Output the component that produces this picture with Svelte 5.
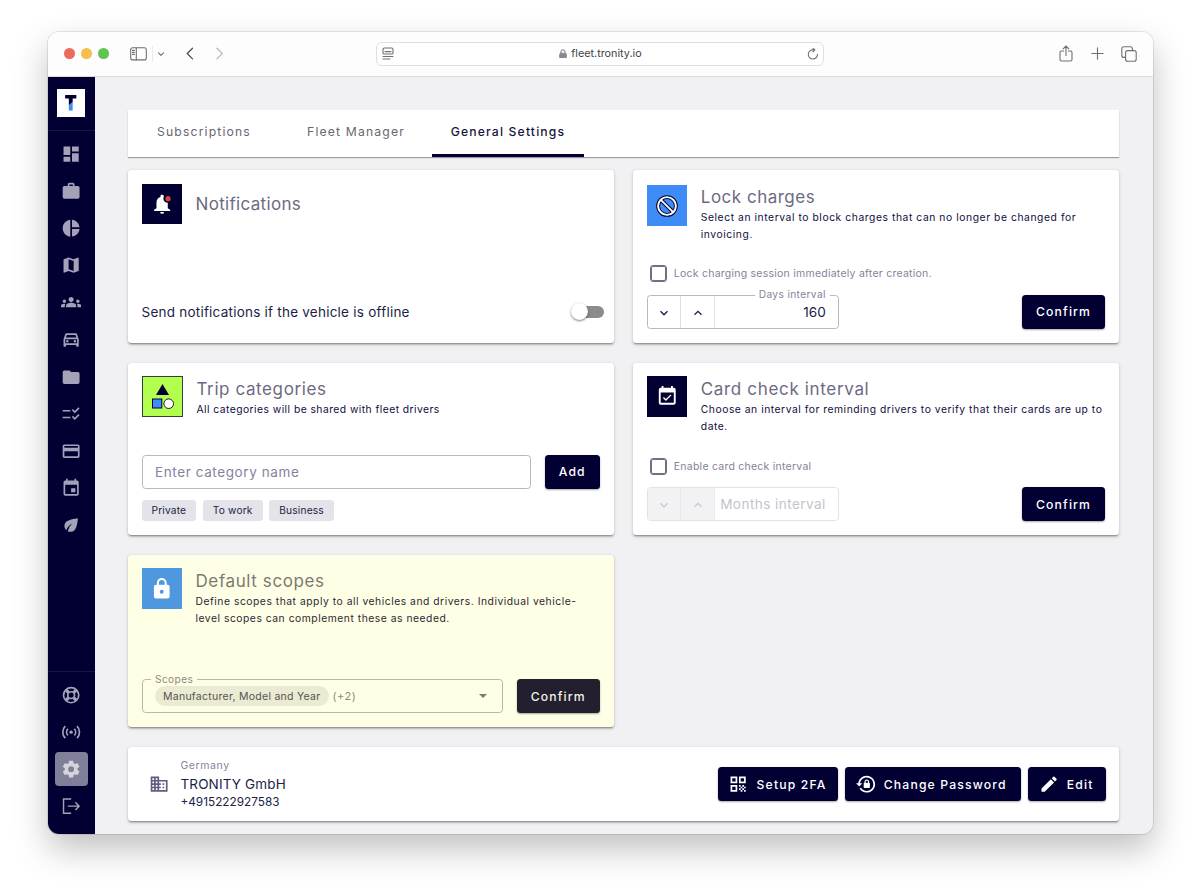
<script lang="ts">
	const icons = {
		dashboard: 'M13 3v6h8V3m-8 18h8V11h-8M3 21h8v-6H3m0-2h8V3H3v10Z',
		briefcase:
			'M10 2h4a2 2 0 0 1 2 2v2h4a2 2 0 0 1 2 2v11a2 2 0 0 1-2 2H4a2 2 0 0 1-2-2V8c0-1.1.9-2 2-2h4V4c0-1.1.9-2 2-2m4 4V4h-4v2h4Z',
		pie: 'M11 2v20c-5.07-.5-9-4.79-9-10s3.93-9.5 9-10zm2.03 0v8.99H22c-.47-4.74-4.24-8.52-8.97-8.99zm0 11.01V22c4.74-.47 8.5-4.25 8.97-8.99h-8.97z',
		map: 'M15 19l-6-2.11V5l6 2.11M20.5 3c-.06 0-.11 0-.16.03L15 5.1 9 3 3.36 4.9c-.21.07-.36.25-.36.48V20.5a.5.5 0 0 0 .5.5c.05 0 .11 0 .16-.03L9 18.9l6 2.1 5.64-1.9c.21-.1.36-.25.36-.48V3.5a.5.5 0 0 0-.5-.5z',
		groups:
			'M12 12.75c1.63 0 3.07.39 4.24.9 1.08.48 1.76 1.56 1.76 2.73V18H6v-1.61c0-1.18.68-2.26 1.76-2.73 1.17-.52 2.61-.91 4.24-.91zM4 13c1.1 0 2-.9 2-2s-.9-2-2-2-2 .9-2 2 .9 2 2 2zm1.13 1.1c-.37-.06-.74-.1-1.13-.1-.99 0-1.93.21-2.78.58A2.01 2.01 0 0 0 0 16.43V18h4.5v-1.61c0-.83.23-1.61.63-2.29zM20 13c1.1 0 2-.9 2-2s-.9-2-2-2-2 .9-2 2 .9 2 2 2zm4 3.43c0-.81-.48-1.53-1.22-1.85A6.95 6.95 0 0 0 20 14c-.39 0-.76.04-1.13.1.4.68.63 1.46.63 2.29V18H24v-1.57zM12 6c1.66 0 3 1.34 3 3s-1.34 3-3 3-3-1.34-3-3 1.34-3 3-3z',
		car: 'M18.92 6.01C18.72 5.42 18.16 5 17.5 5h-11c-.66 0-1.21.42-1.42 1.01L3 12v8c0 .55.45 1 1 1h1c.55 0 1-.45 1-1v-1h12v1c0 .55.45 1 1 1h1c.55 0 1-.45 1-1v-8l-2.08-5.99zM6.85 7h10.29l1.04 3H5.81l1.04-3zM19 17H5v-5h14v5zM7.5 13a1.5 1.5 0 1 0 0 3 1.5 1.5 0 0 0 0-3zm9 0a1.5 1.5 0 1 0 0 3 1.5 1.5 0 0 0 0-3z',
		folder: 'M10 4H4c-1.1 0-2 .9-2 2v12a2 2 0 0 0 2 2h16a2 2 0 0 0 2-2V8a2 2 0 0 0-2-2h-8l-2-2z',
		checklist:
			'M11 7H2v2h9V7zm0 8H2v2h9v-2zm5.34-4-3.54-3.54 1.41-1.41 2.12 2.12 4.24-4.24L22 5.34 16.34 11zm0 8-3.54-3.54 1.41-1.41 2.12 2.12 4.24-4.24L22 13.34 16.34 19z',
		card: 'M20 4H4c-1.11 0-2 .89-2 2v12c0 1.11.89 2 2 2h16c1.11 0 2-.89 2-2V6c0-1.11-.89-2-2-2m0 14H4v-6h16v6m0-10H4V6h16v2z',
		calendar:
			'M19 19H5V8h14m-3-7v2H8V1H6v2H5c-1.11 0-2 .89-2 2v14a2 2 0 0 0 2 2h14a2 2 0 0 0 2-2V5a2 2 0 0 0-2-2h-1V1m-1 11h-5v5h5v-5z',
		leaf: 'M6.05 8.05a7 7 0 0 0-.02 9.88c1.47-3.4 4.09-6.24 7.36-7.93A15.95 15.95 0 0 0 8 19.32c2.6 1.23 5.8.78 7.95-1.37C19.43 14.47 20 4 20 4S9.53 4.57 6.05 8.05z',
		cog: 'M12 15.5A3.5 3.5 0 0 1 8.5 12 3.5 3.5 0 0 1 12 8.5a3.5 3.5 0 0 1 3.5 3.5 3.5 3.5 0 0 1-3.5 3.5m7.43-2.53c.04-.32.07-.64.07-.97s-.03-.66-.07-1l2.11-1.63c.19-.15.24-.42.12-.64l-2-3.46c-.12-.22-.39-.31-.61-.22l-2.49 1c-.52-.39-1.06-.73-1.69-.98l-.37-2.65A.506.506 0 0 0 14 2h-4c-.25 0-.46.18-.5.42l-.37 2.65c-.63.25-1.17.59-1.69.98l-2.49-1c-.22-.09-.49 0-.61.22l-2 3.46c-.13.22-.07.49.12.64L4.57 11c-.04.34-.07.67-.07 1s.03.65.07.97l-2.11 1.66c-.19.15-.25.42-.12.64l2 3.46c.12.22.39.3.61.22l2.49-1.01c.52.4 1.06.74 1.69.99l.37 2.65c.04.24.25.42.5.42h4c.25 0 .46-.18.5-.42l.37-2.65c.63-.26 1.17-.59 1.69-.99l2.49 1.01c.22.08.49 0 .61-.22l2-3.46c.12-.22.07-.49-.12-.64l-2.11-1.66z',
		lock: 'M12 17a2 2 0 0 0 2-2 2 2 0 0 0-2-2 2 2 0 0 0-2 2 2 2 0 0 0 2 2m6-9a2 2 0 0 1 2 2v10a2 2 0 0 1-2 2H6a2 2 0 0 1-2-2V10a2 2 0 0 1 2-2h1V6a5 5 0 0 1 10 0v2h1m-6-5a3 3 0 0 0-3 3v2h6V6a3 3 0 0 0-3-3z',
		calendarCheck:
			'M16.53 11.06 15.47 10l-4.88 4.88-2.12-2.12-1.06 1.06L10.59 17l5.94-5.94zM19 3h-1V1h-2v2H8V1H6v2H5c-1.11 0-1.99.9-1.99 2L3 19a2 2 0 0 0 2 2h14c1.1 0 2-.9 2-2V5c0-1.1-.9-2-2-2zm0 16H5V8h14v11z',
		building:
			'M12 7V3H2v18h20V7H12zM6 19H4v-2h2v2zm0-4H4v-2h2v2zm0-4H4V9h2v2zm0-4H4V5h2v2zm4 12H8v-2h2v2zm0-4H8v-2h2v2zm0-4H8V9h2v2zm0-4H8V5h2v2zm10 12h-8v-2h2v-2h-2v-2h2v-2h-2V9h8v10zm-2-8h-2v2h2v-2zm0 4h-2v2h2v-2z',
		qr: 'M3 11h8V3H3v8zm2-6h4v4H5V5zM3 21h8v-8H3v8zm2-6h4v4H5v-4zM13 3v8h8V3h-8zm6 6h-4V5h4v4zM13 13h2v2h-2zM15 15h2v2h-2zM13 17h2v2h-2zM17 17h2v2h-2zM19 19h2v2h-2zM15 19h2v2h-2zM17 13h2v2h-2zM19 15h2v2h-2z',
		lockReset:
			'M12.63 2c5.53 0 10.01 4.5 10.01 10s-4.48 10-10.01 10c-3.51 0-6.58-1.82-8.37-4.57l1.58-1.25C7.25 18.47 9.76 20 12.64 20a8 8 0 0 0 8-8 8 8 0 0 0-8-8C8.56 4 5.2 7.06 4.71 11h2.76l-3.74 3.73L0 11h2.69c.5-5.05 4.76-9 9.94-9m2.96 8.24c.5.01.91.41.91.92v4.61c0 .5-.41.92-.92.92h-5.53c-.51 0-.92-.42-.92-.92v-4.61c0-.51.41-.91.91-.92V9.23c0-1.53 1.25-2.77 2.77-2.77 1.53 0 2.78 1.24 2.78 2.77v1.01m-2.78-2.38c-.75 0-1.37.61-1.37 1.37v1.01h2.75V9.23c0-.76-.62-1.37-1.38-1.37z',
		pencil:
			'M3 17.25V21h3.75L17.81 9.94l-3.75-3.75L3 17.25zM20.71 7.04a1 1 0 0 0 0-1.41l-2.34-2.34a1 1 0 0 0-1.41 0l-1.83 1.83 3.75 3.75 1.83-1.83z'
	};

	type IconName = keyof typeof icons;

	const nav: IconName[] = [
		'dashboard',
		'briefcase',
		'pie',
		'map',
		'groups',
		'car',
		'folder',
		'checklist',
		'card',
		'calendar',
		'leaf'
	];

	const tabs = [
		{ label: 'Subscriptions', active: false },
		{ label: 'Fleet Manager', active: false },
		{ label: 'General Settings', active: true }
	];

	const categories = ['Private', 'To work', 'Business'];
</script>

{#snippet icon(name: IconName)}
	<svg class="icon" viewBox="0 0 24 24"><path d={icons[name]} fill="currentColor" fill-rule="evenodd" /></svg>
{/snippet}

{#snippet stepper()}
	<span class="step"><svg viewBox="0 0 12 12"><path d="M2.5 4.3 6 7.8l3.5-3.5" /></svg></span>
	<span class="step"><svg viewBox="0 0 12 12"><path d="M2.5 7.8 6 4.3l3.5 3.5" /></svg></span>
{/snippet}

<div class="desktop">
	<div class="window">
		<header class="chrome">
			<div class="chrome-side">
				<span class="dot red"></span>
				<span class="dot yellow"></span>
				<span class="dot green"></span>
				<svg class="sidebar-toggle" viewBox="0 0 17 14">
					<rect x=".7" y=".7" width="15.6" height="12.2" rx="2" />
					<path d="M6.3 1v12M2.5 3.4h1.8M2.5 5.4h1.8M2.5 7.4h1.8" />
				</svg>
				<span class="chrome-line"></span>
				<svg class="tiny" viewBox="0 0 8 8"><path d="m1.5 2.8 2.5 2.5 2.5-2.5" /></svg>
				<svg class="back" viewBox="0 0 8 14"><path d="M7 1.3 1.3 7 7 12.7" /></svg>
				<svg class="forward" viewBox="0 0 8 14"><path d="M1 1.3 6.7 7 1 12.7" /></svg>
			</div>
			<div class="address">
				<svg class="reader" viewBox="0 0 12 13">
					<rect x="1" y="1" width="10" height="6" rx="1.3" />
					<path d="M3 4.6h6M1 9.5h10M1 12h7" />
				</svg>
				<span class="url">
					<svg viewBox="0 0 9 11"><path d="M2.2 5V3.2a2.3 2.3 0 0 1 4.6 0V5" /><rect x=".8" y="4.8" width="7.4" height="5.6" rx="1" /></svg>
					fleet.tronity.io
				</span>
				<svg class="reload" viewBox="0 0 12 12"><path d="M10.5 6.4A4.6 4.6 0 1 1 6.5 1.9h1.2M6 .2l1.9 1.7L6 3.8" /></svg>
			</div>
			<div class="chrome-actions">
				<svg width="14" height="17" viewBox="0 0 14 17"><path d="M4.6 6H2.5C1.6 6 1 6.6 1 7.5v7c0 .9.6 1.5 1.5 1.5h9c.9 0 1.5-.6 1.5-1.5v-7c0-.9-.6-1.5-1.5-1.5H9.4M7 10.5V1M4.2 3.8 7 1l2.8 2.8" /></svg>
				<svg width="13" height="13" viewBox="0 0 13 13"><path d="M6.500.8v11.400M.8 6.500h11.400" /></svg>
				<svg width="16" height="16" viewBox="0 0 16 16"><rect x="4.6" y="4.6" width="10.6" height="10.6" rx="2" /><path d="M4.6 11.4H2.8c-1.2 0-2-.8-2-2V2.8c0-1.2.8-2 2-2h6.6c1.2 0 2 .8 2 2v1.8" /></svg>
			</div>
		</header>

		<div class="app">
			<nav class="sidebar">
				<div class="logo">
					<svg viewBox="0 0 27 27">
						<path d="M8 6h11v3.3h-3.6V13l-3.8 3V9.3H8z" fill="#020033" />
						<path d="M15.4 12.2V21h-3.8v-4.500z" fill="#3f8cf8" />
					</svg>
				</div>
				<div class="nav-main">
					{#each nav as name}
						<span class="nav-item">{@render icon(name)}</span>
					{/each}
				</div>
				<div class="nav-foot">
					<span class="nav-item">
						<svg class="icon line" viewBox="0 0 24 24">
							<circle cx="12" cy="12" r="9" /><circle cx="12" cy="12" r="4" />
							<path d="m5.8 5.8 3.2 3.2m6 6 3.2 3.2M18.2 5.8 15 9m-6 6-3.2 3.2" stroke-width="4" />
						</svg>
					</span>
					<span class="nav-item">
						<svg class="icon line" viewBox="0 0 24 24">
							<circle cx="12" cy="12" r="2" fill="currentColor" stroke="none" />
							<path d="M8.2 15.8a5.4 5.4 0 0 1 0-7.6M15.8 8.200a5.400 5.400 0 0 1 0 7.600M5 19a9.900 9.900 0 0 1 0-14M19 5a9.900 9.900 0 0 1 0 14" />
						</svg>
					</span>
					<span class="nav-item current">{@render icon('cog')}</span>
					<span class="nav-item">
						<svg class="icon line thin" viewBox="0 0 24 24"><path d="M12 3.500H3v17h9M8 12h13M17 7.500l4.500 4.500-4.500 4.500" /></svg>
					</span>
				</div>
			</nav>

			<main>
				<div class="tabs">
					{#each tabs as tab}
						<span class="tab" class:active={tab.active}>{tab.label}</span>
					{/each}
				</div>

				<div class="cards">
					<section class="card">
						<div class="head middle">
							<div class="tile navy">
								<svg class="icon" viewBox="0 0 24 24">
									<path d="M12 1c1.200 0 2 .7 2 1.700v1c2.900.8 4.700 3.400 4.700 6.300v6.800l2.800 2v1.400H2.500v-1.400l2.800-2V10c0-2.900 1.800-5.500 4.700-6.300v-1C10 1.700 10.800 1 12 1zM9.700 21.200h4.600a2.300 2.300 0 0 1-4.600 0z" fill="#fff" />
									<circle cx="18.500" cy="5.500" r="5" fill="#020033" />
									<circle cx="19" cy="5.500" r="3.100" fill="#d9433b" />
								</svg>
							</div>
							<h2 class="t-notif">Notifications</h2>
						</div>
						<div class="row offline">
							<span class="offline-label">Send notifications if the vehicle is offline</span>
							<span class="switch"><span class="thumb"></span></span>
						</div>
					</section>

					<section class="card lower">
						<div class="head">
							<div class="tile blue">
								<svg class="icon" viewBox="-1 -1 26 26">
									<g fill="none" stroke="#020033" stroke-width="4.600"><circle cx="12" cy="12" r="10.500" /><path d="m5 5 14 14" /></g>
									<g fill="none" stroke="#fff" stroke-width="2.300"><circle cx="12" cy="12" r="10.500" /><path d="m4.500 4.500 15 15" /></g>
								</svg>
							</div>
							<div>
								<h2 class="t-lock">Lock charges</h2>
								<p class="d-lock">Select an interval to block charges that can no longer be changed for<br />invoicing.</p>
							</div>
						</div>
						<div class="bottom">
							<label class="check"><span class="box"></span><span class="c-lock">Lock charging session immediately after creation.</span></label>
							<div class="row">
								<div class="number">
									{@render stepper()}
									<span class="value">160</span>
									<span class="float-label right">Days interval</span>
								</div>
								<button class="btn confirm">Confirm</button>
							</div>
						</div>
					</section>

					<section class="card">
						<div class="head">
							<div class="tile lime">
								<svg viewBox="0 0 41 41">
									<rect x=".5" y=".5" width="40" height="40" fill="#b2ff4d" stroke="#33403a" />
									<path d="m20.500 8 6.500 11H14z" fill="#020033" />
									<rect x="10.500" y="23" width="9.300" height="9" fill="#3f8cf8" stroke="#020033" />
									<circle cx="26.700" cy="27.700" r="4.800" fill="#fff" stroke="#020033" stroke-width=".9" />
								</svg>
							</div>
							<div>
								<h2 class="t-trip">Trip categories</h2>
								<p class="d-trip">All categories will be shared with fleet drivers</p>
							</div>
						</div>
						<div class="bottom">
							<div class="row trip-row">
								<div class="field"><span class="placeholder">Enter category name</span></div>
								<button class="btn add">Add</button>
							</div>
							<div class="chips">
								{#each categories as category}
									<span class="chip">{category}</span>
								{/each}
							</div>
						</div>
					</section>

					<section class="card">
						<div class="head">
							<div class="tile navy calendar">{@render icon('calendarCheck')}</div>
							<div>
								<h2 class="t-card">Card check interval</h2>
								<p class="d-card">Choose an interval for reminding drivers to verify that their cards are up to<br />date.</p>
							</div>
						</div>
						<div class="bottom">
							<label class="check"><span class="box"></span><span class="c-card">Enable card check interval</span></label>
							<div class="row">
								<div class="number disabled">
									{@render stepper()}
									<span class="value">Months interval</span>
								</div>
								<button class="btn confirm">Confirm</button>
							</div>
						</div>
					</section>

					<section class="card highlighted">
						<div class="head">
							<div class="tile sky">{@render icon('lock')}</div>
							<div>
								<h2 class="t-scopes">Default scopes</h2>
								<p class="d-scopes">Define scopes that apply to all vehicles and drivers. Individual vehicle-<br />level scopes can complement these as needed.</p>
							</div>
						</div>
						<div class="row scopes-row">
							<div class="field scopes">
								<span class="pill">Manufacturer, Model and Year</span>
								<span class="more">(+2)</span>
								<span class="caret"></span>
								<span class="float-label left">Scopes</span>
							</div>
							<button class="btn confirm dark">Confirm</button>
						</div>
					</section>
				</div>

				<section class="account">
					<span class="building">{@render icon('building')}</span>
					<div class="company">
						<span class="country">Germany</span>
						<span class="name">TRONITY GmbH</span>
						<span class="phone">+4915222927583</span>
					</div>
					<div class="account-actions">
						<button class="btn setup">{@render icon('qr')}<span>Setup 2FA</span></button>
						<button class="btn change">{@render icon('lockReset')}<span>Change Password</span></button>
						<button class="btn edit">{@render icon('pencil')}<span>Edit</span></button>
					</div>
				</section>
			</main>
		</div>
	</div>
</div>

<style>
	:global(body) {
		background: #fff;
	}

	.desktop {
		width: 1200px;
		height: 896px;
		box-sizing: border-box;
		padding: 31.5px 0 0 47.5px;
		overflow: hidden;
	}

	.window {
		width: 1105.5px;
		height: 802px;
		display: flex;
		flex-direction: column;
		border-radius: 11px;
		overflow: hidden;
		background: #f1f1f4;
		box-shadow:
			0 0 0 1px rgba(0, 0, 0, 0.09),
			0 15px 34px rgba(0, 0, 0, 0.25);
		font-family: Inter, 'Open Sans', sans-serif;
		color: #201e45;
	}

	svg {
		display: block;
		flex: none;
	}

	.chrome {
		height: 45px;
		box-sizing: border-box;
		display: grid;
		grid-template-columns: 328.5px 448px 1fr;
		align-items: center;
		background: #fdfdfd;
		border-bottom: 1px solid #dcdcdc;
		flex: none;
	}

	.chrome svg {
		fill: none;
		stroke: #707070;
		stroke-width: 1.1;
		stroke-linecap: round;
		stroke-linejoin: round;
	}

	.chrome-side {
		display: flex;
		align-items: center;
		padding-left: 16.5px;
	}

	.dot {
		width: 10.5px;
		height: 10.5px;
		border-radius: 50%;
		margin-right: 6.5px;
	}

	.red {
		background: #ec6a5e;
	}

	.yellow {
		background: #f4bf4f;
	}

	.green {
		background: #61c554;
	}

	.sidebar-toggle {
		width: 17px;
		height: 14px;
		margin-left: 15px;
	}

	.chrome-line {
		width: 1px;
		height: 16px;
		margin-left: 5px;
		background: #ececec;
	}

	.tiny {
		width: 8px;
		margin-left: 4px;
	}

	.back {
		width: 7.5px;
		margin-left: 20.5px;
	}

	.chrome .back {
		stroke: #4d4d4d;
		stroke-width: 1.4;
	}

	.forward {
		width: 7.5px;
		margin-left: 22.5px;
	}

	.chrome .forward {
		stroke: #b5b5b5;
		stroke-width: 1.3;
	}

	.address {
		height: 24px;
		box-sizing: border-box;
		display: flex;
		align-items: center;
		justify-content: space-between;
		padding: 0 4px 0 5px;
		border: 1px solid #dfdfdf;
		border-radius: 6px;
		background: #fff;
	}

	.reader {
		width: 12px;
	}

	.reload {
		width: 12px;
	}

	.url {
		display: flex;
		align-items: center;
		gap: 4px;
		font-size: 10.8px;
		color: #424242;
	}

	.url svg {
		width: 8px;
	}

	.url rect {
		fill: #8a8a8a;
		stroke: #8a8a8a;
	}

	.chrome-actions {
		display: flex;
		align-items: center;
		justify-content: flex-end;
		gap: 17.5px;
		padding-right: 16px;
	}

	.app {
		flex: 1;
		display: flex;
	}

	.sidebar {
		width: 47px;
		display: flex;
		flex-direction: column;
		background: #020033;
		color: #a3a2b8;
	}

	.logo {
		height: 54.5px;
		box-sizing: border-box;
		padding: 12.5px 9.5px;
		border-bottom: 1px solid #17163f;
	}

	.logo svg {
		width: 27.5px;
		background: #fff;
	}

	.nav-main {
		flex: 1;
		padding-top: 6px;
	}

	.nav-foot {
		height: 162.5px;
		box-sizing: border-box;
		padding-top: 6px;
		border-top: 1px solid #17163f;
	}

	.nav-item {
		width: 33px;
		height: 34px;
		display: flex;
		align-items: center;
		justify-content: center;
		margin: 0 7px 3.12px;
		border-radius: 4px;
	}

	.current {
		background: #807f99;
		color: #d5d4dd;
	}

	.icon {
		width: 20.25px;
		height: 20.25px;
	}

	.line {
		fill: none;
		stroke: currentColor;
		stroke-width: 2;
	}

	.thin {
		stroke-width: 1.7;
	}

	main {
		flex: 1;
		padding: 33.5px 34px 0 33.5px;
	}

	.tabs {
		height: 47px;
		display: flex;
		background: #fff;
		box-shadow: 0 1px 1px rgba(0, 0, 0, 0.35);
	}

	.tab {
		width: 152px;
		height: 47px;
		box-sizing: border-box;
		padding-bottom: 4px;
		display: flex;
		align-items: center;
		justify-content: center;
		font-size: 12.2px;
		letter-spacing: 1.15px;
		color: #67666f;
	}

	.active {
		border-bottom: 3px solid #020033;
		padding-bottom: 1px;
		font-weight: 500;
		color: #17153b;
	}

	.cards {
		display: grid;
		grid-template-columns: 485.5px 485.5px;
		grid-auto-rows: 172.5px;
		gap: 19.8px;
		margin-top: 13.4px;
	}

	.card,
	.account {
		box-sizing: border-box;
		border-radius: 3.5px;
		background: #fff;
		box-shadow:
			0 2.5px 1px -1.5px rgba(0, 0, 0, 0.2),
			0 1.5px 2px rgba(0, 0, 0, 0.18),
			0 1px 4px rgba(0, 0, 0, 0.12);
	}

	.card {
		display: flex;
		flex-direction: column;
		justify-content: space-between;
		padding: 13.5px 13.5px 14px;
	}

	.lower {
		padding-top: 15px;
	}

	.head {
		display: flex;
		gap: 13.5px;
	}

	.middle {
		align-items: center;
	}

	.tile {
		width: 40.5px;
		height: 40.5px;
		flex: none;
		display: flex;
		align-items: center;
		justify-content: center;
		color: #fff;
	}

	.navy {
		background: #020033;
	}

	.calendar .icon {
		width: 22.5px;
		height: 22.5px;
	}

	.blue {
		background: #3f8cf8;
	}

	.blue .icon {
		width: 22px;
		height: 22px;
	}

	.sky {
		background: #4f97df;
	}

	.sky .icon {
		width: 23.500px;
		height: 23.500px;
	}

	.lime {
		width: 41.5px;
	}

	.lime svg {
		width: 41px;
	}

	h2 {
		margin: 2px 0 0;
		font-size: 17px;
		line-height: 22px;
		font-weight: 400;
		color: #6c6a82;
		white-space: nowrap;
	}

	.middle h2 {
		margin: 0;
	}

	.lower h2 {
		margin-top: 1px;
	}

	.t-notif {
		letter-spacing: 0.32px;
	}

	.t-lock {
		letter-spacing: 0.5px;
	}

	.t-trip,
	.t-scopes {
		letter-spacing: 0.6px;
	}

	.t-card {
		letter-spacing: 0.66px;
	}

	p {
		margin: 1px 0 0;
		font-size: 10.3px;
		line-height: 16.9px;
		color: #100e3d;
		white-space: nowrap;
	}

	.d-lock {
		letter-spacing: 0.57px;
	}

	.d-trip {
		letter-spacing: 0.46px;
	}

	.d-card,
	.d-scopes {
		letter-spacing: 0.53px;
	}

	.row {
		display: flex;
		align-items: center;
		justify-content: space-between;
	}

	.offline {
		height: 34px;
	}

	.offline-label {
		font-size: 13.5px;
		letter-spacing: 0.23px;
	}

	.switch {
		width: 27.5px;
		height: 12px;
		margin-right: -3.5px;
		border-radius: 6px;
		background: #8b8b8b;
	}

	.thumb {
		display: block;
		width: 17px;
		height: 17px;
		margin: -2.5px 0 0 -5px;
		border-radius: 50%;
		background: #fff;
		box-shadow:
			0 1px 2px rgba(0, 0, 0, 0.35),
			0 1px 3px rgba(0, 0, 0, 0.2);
	}

	.btn {
		height: 34px;
		padding: 0;
		display: flex;
		align-items: center;
		justify-content: center;
		border: 0;
		border-radius: 3.5px;
		background: #020033;
		box-shadow: 0 1px 2px rgba(0, 0, 0, 0.35);
		color: #fff;
		font: 500 12.2px Inter, sans-serif;
		letter-spacing: 1.15px;
	}

	.confirm {
		width: 83.5px;
	}

	.add {
		width: 55.5px;
	}

	.dark {
		background: #231f2e;
		color: #f4f4e6;
	}

	.check {
		display: flex;
		align-items: center;
		gap: 7.5px;
		height: 14px;
		margin: 0 0 14px 4.500px;
		font-size: 10.5px;
		letter-spacing: 0.24px;
		color: #85839a;
	}

	.box {
		width: 15px;
		height: 15px;
		box-sizing: border-box;
		border: 1.5px solid #716f86;
		outline: 0.3px solid #716f86;
		border-radius: 2px;
	}

	.number {
		position: relative;
		width: 192.5px;
		height: 34px;
		box-sizing: border-box;
		display: flex;
		border: 1px solid #b7b6c4;
		border-radius: 3.5px;
	}

	.step {
		width: 33.5px;
		box-sizing: border-box;
		display: flex;
		align-items: center;
		justify-content: center;
		padding-top: 2px;
		border-right: 1px solid #dfdfe5;
	}

	.step svg {
		width: 12px;
		fill: none;
		stroke: #201e45;
		stroke-width: 1.3;
	}

	.value {
		flex: 1;
		display: flex;
		align-items: center;
		justify-content: flex-end;
		padding-right: 12.5px;
		font-size: 13.6px;
	}

	.disabled {
		border-color: #e2e2e7;
		color: #c4c3cd;
	}

	.disabled .value {
		letter-spacing: 0.42px;
	}

	.disabled .step {
		background: #f2f2f4;
		border-color: #e9e9ec;
	}

	.disabled .step svg {
		stroke: #c9c8d1;
	}

	.float-label {
		position: absolute;
		top: -7.5px;
		padding: 0 4px;
		background: #fff;
		font-size: 10.2px;
		line-height: 13px;
		letter-spacing: 0.36px;
		color: #85839a;
	}

	.right {
		right: 8.5px;
	}

	.left {
		left: 8.5px;
		background: #ffffe5;
		color: #8c8b80;
	}

	.field {
		position: relative;
		height: 34px;
		box-sizing: border-box;
		display: flex;
		align-items: center;
		padding: 0 12.5px;
		border: 1px solid #b7b6c4;
		border-radius: 3.5px;
	}

	.trip-row .field {
		width: 389.5px;
	}

	.placeholder {
		font-size: 13.5px;
		letter-spacing: 0.6px;
		color: #85839a;
	}

	.chips {
		display: flex;
		gap: 6.7px;
		margin-top: 11px;
	}

	.chip {
		height: 21.5px;
		display: flex;
		align-items: center;
		padding: 0 10px;
		border-radius: 3px;
		background: #e4e3ea;
		font-size: 10.2px;
		letter-spacing: 0.16px;
	}

	.highlighted {
		background: #ffffe5;
	}

	.highlighted h2 {
		color: #7b7a72;
	}

	.highlighted p {
		color: #2b2935;
	}

	.scopes {
		width: 361px;
		border-color: #b9b8a8;
	}

	.pill {
		height: 20px;
		display: flex;
		align-items: center;
		padding: 0 8px;
		border-radius: 10px;
		background: #ebebd3;
		font-size: 10.5px;
		letter-spacing: 0.27px;
		color: #55544f;
	}

	.more {
		margin-left: 4px;
		font-size: 11px;
		letter-spacing: 0.55px;
		color: #8c8b80;
	}

	.caret {
		margin-left: auto;
		margin-right: 2.5px;
		border: 4.5px solid transparent;
		border-top-color: #7c7b70;
		border-bottom: 0;
	}

	.account {
		height: 74px;
		display: flex;
		align-items: center;
		margin-top: 19.6px;
		padding: 0 13.5px 0 21px;
	}

	.building {
		color: #5f5d80;
	}

	.company {
		display: flex;
		flex-direction: column;
		margin-left: 11.2px;
		padding-bottom: 1px;
		line-height: 18px;
	}

	.country {
		font-size: 10.5px;
		letter-spacing: 0.6px;
		color: #85839a;
	}

	.name {
		font-size: 13.5px;
		letter-spacing: 0.15px;
	}

	.phone {
		font-size: 11.8px;
	}

	.account-actions {
		display: flex;
		gap: 6.7px;
		margin-left: auto;
	}

	.account-actions .btn {
		justify-content: flex-start;
		padding-left: 10.5px;
		gap: 8px;
	}

	.setup {
		width: 120.5px;
	}

	.change {
		width: 176.3px;
	}

	.edit {
		width: 77.5px;
	}
</style>
